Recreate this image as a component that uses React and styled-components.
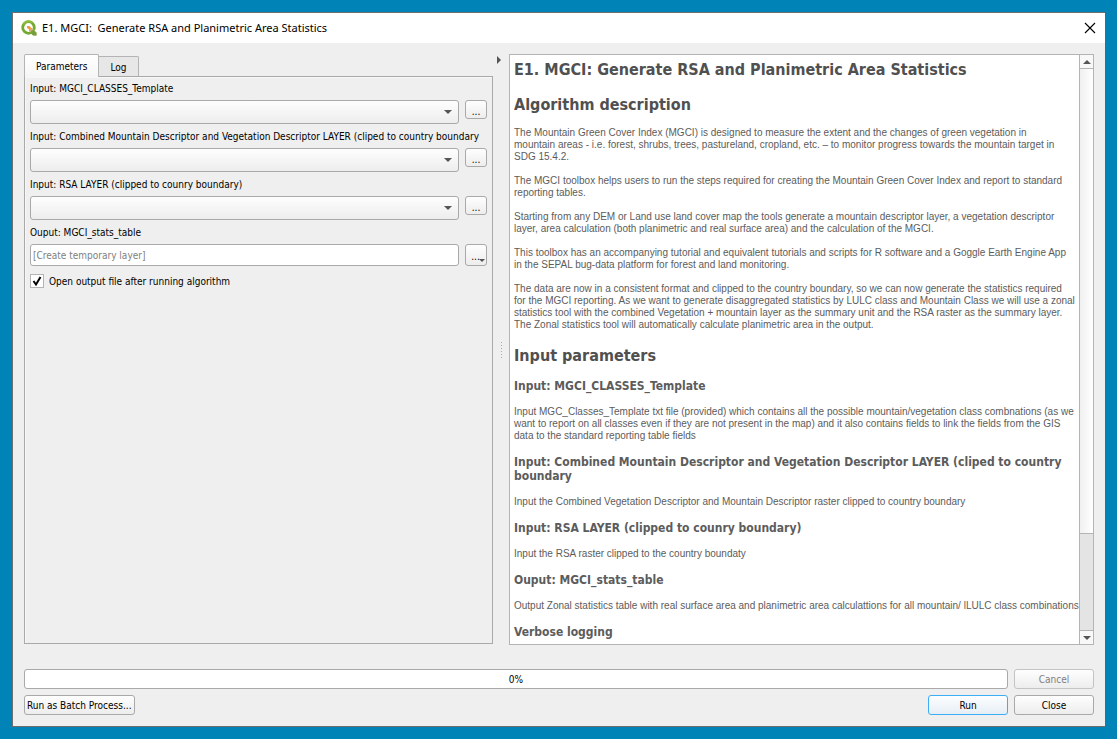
import React from "react";
import styled, { createGlobalStyle, css } from "styled-components";

const GlobalStyle = createGlobalStyle`
  *, *::before, *::after { box-sizing: border-box; }
  body { margin: 0; background: #0083b6; }
  body, button, input, select {
    font-family: "DejaVu Sans Condensed", "Noto Sans", sans-serif;
    font-size: 10px;
    line-height: 12px;
    color: #000;
  }
`;

const Desktop = styled.div`
  height: 100vh;
  padding: 12px;
  display: flex;
`;

const Window = styled.main`
  flex: 1;
  min-width: 0;
  display: flex;
  flex-direction: column;
  background: #efefef;
  border: solid #6e6e6e;
  border-width: 1px 0 1px 1px;
`;

const TitleBar = styled.header`
  height: 30px;
  flex: none;
  display: flex;
  align-items: center;
  gap: 5px;
  padding: 0 9px 0 8px;
  background: #fff;
`;

const Title = styled.h1`
  flex: 1;
  margin: 0;
  font: 400 11px/16px "Noto Sans", "Open Sans", sans-serif;
  white-space: pre;
`;

const CloseIconButton = styled.button`
  display: flex;
  padding: 0;
  border: 0;
  background: none;
`;

const Body = styled.div`
  flex: 1;
  min-height: 0;
  display: flex;
  flex-direction: column;
  padding: 11px;
`;

const Split = styled.div`
  flex: 1;
  min-height: 0;
  display: grid;
  grid-template-columns: minmax(0, 469fr) 16px minmax(0, 585fr);
`;

const TabWidget = styled.section`
  display: flex;
  flex-direction: column;
  min-height: 0;
`;

const TabBar = styled.div`
  display: flex;
  align-items: flex-end;
  height: 22px;
`;

const Tab = styled.button`
  height: 20px;
  padding: 2px 11px 0;
  border: 1px solid #b4b4b4;
  border-width: 1px 1px 0 0;
  border-radius: 0 2px 0 0;
  background: #e7e7e7;
  ${(p) =>
    p.$active &&
    css`
      height: 23px;
      margin-bottom: -1px;
      border-width: 1px 1px 0 1px;
      border-radius: 2px 2px 0 0;
      background: linear-gradient(#fff, #f6f6f6);
      z-index: 1;
    `}
`;

const TabPanel = styled.div`
  flex: 1;
  margin-bottom: 1px;
  padding: 6px 5px 5px;
  border: 1px solid #a9a9a9;
  box-shadow: inset 1px 1px #f7f7f7;
`;

const Field = styled.div`
  display: grid;
  grid-template-columns: minmax(0, 1fr) 22px;
  gap: 5px 6px;
  margin-bottom: 7px;
`;

const FieldLabel = styled.label`
  grid-column: 1 / -1;
  white-space: nowrap;
`;

const raised = css`
  border: 1px solid #a9a9a9;
  border-radius: 3px;
  background: linear-gradient(#fefefe, #ededed);
`;

const ComboWrap = styled.div`
  display: grid;
  align-items: center;
  & > * { grid-area: 1 / 1; }
  & > svg { justify-self: end; margin-right: 7px; pointer-events: none; }
`;

const Combo = styled.select`
  ${raised}
  width: 100%;
  height: 24px;
  appearance: none;
`;

const TextInput = styled.input`
  height: 22px;
  min-width: 0;
  padding: 1px 2px 0;
  border: 1px solid #a9a9a9;
  border-radius: 3px;
  background: #fff;
  &::placeholder { color: #808080; opacity: 1; }
`;

const BrowseButton = styled.button`
  ${raised}
  display: flex;
  align-items: center;
  justify-content: center;
  height: ${(p) => (p.$menu ? 22 : 19)}px;
  padding: ${(p) => (p.$menu ? "4px 0 0 4px" : "4px 0 0")};
  & > svg { align-self: flex-end; margin: 0 0 3px -1px; }
`;

const CheckRow = styled.label`
  display: flex;
  align-items: center;
  gap: 5px;
  margin-top: 8px;
`;

const CheckCaption = styled.span`
  padding-top: 2px;
`;

const CheckBox = styled.span`
  display: grid;
  & > * { grid-area: 1 / 1; }
  & > svg { pointer-events: none; }
`;

const CheckInput = styled.input`
  appearance: none;
  width: 14px;
  height: 14px;
  margin: 0;
  border: 1px solid #b4b4b4;
  background: #fff;
  & + svg { visibility: hidden; }
  &:checked + svg { visibility: visible; }
`;

const Splitter = styled.div`
  display: grid;
  grid-template-rows: 1fr auto 1fr;
  justify-items: center;
  & > svg:first-child { margin-top: 2px; margin-right: 4px; }
`;

const HelpFrame = styled.section`
  display: flex;
  min-height: 0;
  border: 1px solid #b4b4b4;
  background: #fff;
`;

const HelpText = styled.article`
  flex: 1;
  min-width: 0;
  overflow: hidden;
  padding: 5px 0 0 4px;
  color: #5c5c5c;
`;

const HelpHeading = styled.h2`
  margin: ${(p) => (p.$first ? "0 0 15px" : "15px 0 12px")};
  font-size: 16px;
  line-height: 20px;
  color: #505050;
`;

const HelpSubheading = styled.h3`
  margin: 13px 0;
  font-size: 12px;
  line-height: 14px;
  color: #5c5c5c;
`;

const HelpParagraph = styled.p`
  margin: 12px 0;
  font-family: "Liberation Sans", Arial, sans-serif;
  white-space: pre;
`;

const ScrollBar = styled.div`
  width: 14px;
  flex: none;
  display: flex;
  flex-direction: column;
  border-left: 1px solid #b4b4b4;
  background: #e4e4e4;
`;

const ScrollButton = styled.button`
  height: 13px;
  display: flex;
  align-items: center;
  justify-content: center;
  padding: 0;
  border: 0;
  background: #f8f8f8;
`;

const ScrollThumb = styled.div`
  flex: 466;
  border: solid #b4b4b4;
  border-width: 1px 0;
  background: linear-gradient(90deg, #f0f0f0, #fff);
`;

const ScrollTrack = styled.div`
  flex: 96;
  border-bottom: 1px solid #b4b4b4;
`;

const Footer = styled.footer`
  display: grid;
  grid-template-columns: 1fr 80px;
  gap: 6px;
  margin-top: 24px;
`;

const Progress = styled.div`
  height: 20px;
  display: flex;
  align-items: center;
  justify-content: center;
  padding-top: 2px;
  border: 1px solid #a9a9a9;
  border-radius: 3px;
  background: #fff;
`;

const Actions = styled.div`
  display: flex;
  justify-content: space-between;
`;

const PushButton = styled.button`
  ${raised}
  height: 20px;
  min-width: 80px;
  padding: 2px 2px 0;
  &:disabled { color: #808080; border-color: #c4c4c4; }
  ${(p) =>
    p.$primary &&
    css`
      border-color: #3daef5;
      background: linear-gradient(#fdfeff, #e6eef5);
    `}
`;

const Arrow = ({ up, size = 8 }) => (
  <svg width={size} height={size / 2} viewBox="0 0 8 4" aria-hidden="true">
    <path d={up ? "M0 4L4 0L8 4Z" : "M0 0H8L4 4Z"} fill="#555" />
  </svg>
);

const Logo = () => (
  <svg width="16" height="16" viewBox="0 0 16 16" aria-hidden="true">
    <circle cx="7.5" cy="7.5" r="5.8" fill="none" stroke="#74a92f" strokeWidth="2.8" />
    <path d="M2.2 4.5A6.2 6.2 0 0 1 11.5 2.8" fill="none" stroke="#8cbe3c" strokeWidth="1.8" />
    <path d="M8 8H11L15.5 12.5V15.5H12.5L8 11Z" fill="#c8b477" />
    <path d="M10.5 10.5L12.5 10L15.5 13V15.5H12L9.5 13Z" fill="#74a03a" />
    <path d="M6 6H8.5L10 7.5V9L8.5 10L6 8Z" fill="#f39a45" />
  </svg>
);

const selects = [
  ["classes", "Input: MGCI_CLASSES_Template"],
  ["combined", "Input: Combined Mountain Descriptor and Vegetation Descriptor LAYER (cliped to country boundary"],
  ["rsa", "Input: RSA LAYER (clipped to counry boundary)"],
];

const description = [
  "The Mountain Green Cover Index (MGCI) is designed to measure the extent and the changes of green vegetation in\nmountain areas - i.e. forest, shrubs, trees, pastureland, cropland, etc. – to monitor progress towards the mountain target in\nSDG 15.4.2.",
  "The MGCI toolbox helps users to run the steps required for creating the Mountain Green Cover Index and report to standard\nreporting tables.",
  "Starting from any DEM or Land use land cover map the tools generate a mountain descriptor layer, a vegetation descriptor\nlayer, area calculation (both planimetric and real surface area) and the calculation of the MGCI.",
  "This toolbox has an accompanying tutorial and equivalent tutorials and scripts for R software and a Goggle Earth Engine App\nin the SEPAL bug-data platform for forest and land monitoring.",
  "The data are now in a consistent format and clipped to the country boundary, so we can now generate the statistics required\nfor the MGCI reporting. As we want to generate disaggregated statistics by LULC class and Mountain Class we will use a zonal\nstatistics tool with the combined Vegetation + mountain layer as the summary unit and the RSA raster as the summary layer.\nThe Zonal statistics tool will automatically calculate planimetric area in the output.",
];

const parameters = [
  [
    "Input: MGCI_CLASSES_Template",
    "Input MGC_Classes_Template txt file (provided) which contains all the possible mountain/vegetation class combnations (as we\nwant to report on all classes even if they are not present in the map) and it also contains fields to link the fields from the GIS\ndata to the standard reporting table fields",
  ],
  [
    "Input: Combined Mountain Descriptor and Vegetation Descriptor LAYER (cliped to country boundary",
    "Input the Combined Vegetation Descriptor and Mountain Descriptor raster clipped to country boundary",
  ],
  ["Input: RSA LAYER (clipped to counry boundary)", "Input the RSA raster clipped to the country boundaty"],
  [
    "Ouput: MGCI_stats_table",
    "Output Zonal statistics table with real surface area and planimetric area calculattions for all mountain/ lLULC class combinations",
  ],
];

export default function App() {
  return (
    <Desktop>
      <GlobalStyle />
      <Window>
        <TitleBar>
          <Logo />
          <Title>{"E1. MGCI:  Generate RSA and Planimetric Area Statistics"}</Title>
          <CloseIconButton aria-label="Close window">
            <svg width="12" height="12" viewBox="0 0 12 12">
              <path d="M1 1L11 11M11 1L1 11" stroke="#000" strokeWidth="1.1" />
            </svg>
          </CloseIconButton>
        </TitleBar>
        <Body>
          <Split>
            <TabWidget>
              <TabBar role="tablist">
                <Tab role="tab" aria-selected="true" $active>Parameters</Tab>
                <Tab role="tab" aria-selected="false">Log</Tab>
              </TabBar>
              <TabPanel role="tabpanel">
                {selects.map(([id, label]) => (
                  <Field key={id}>
                    <FieldLabel htmlFor={id}>{label}</FieldLabel>
                    <ComboWrap>
                      <Combo id={id}><option value="" /></Combo>
                      <Arrow />
                    </ComboWrap>
                    <BrowseButton>...</BrowseButton>
                  </Field>
                ))}
                <Field>
                  <FieldLabel htmlFor="output">Ouput: MGCI_stats_table</FieldLabel>
                  <TextInput id="output" placeholder="[Create temporary layer]" />
                  <BrowseButton $menu>...<Arrow size={6} /></BrowseButton>
                </Field>
                <CheckRow>
                  <CheckBox>
                    <CheckInput type="checkbox" defaultChecked />
                    <svg width="14" height="14" viewBox="0 0 14 14">
                      <path d="M3.5 7L6 10.5L10.5 3" fill="none" stroke="#000" strokeWidth="2" />
                    </svg>
                  </CheckBox>
                  <CheckCaption>Open output file after running algorithm</CheckCaption>
                </CheckRow>
              </TabPanel>
            </TabWidget>
            <Splitter>
              <svg width="4" height="8" viewBox="0 0 4 8"><path d="M0 0L4 4L0 8Z" fill="#555" /></svg>
              <svg width="2" height="18" viewBox="0 0 2 18">
                <path d="M1.5 1V18" stroke="#a8a8a8" strokeWidth="1" strokeDasharray="1 2" />
              </svg>
            </Splitter>
            <HelpFrame>
              <HelpText>
                <HelpHeading $first>E1. MGCI: Generate RSA and Planimetric Area Statistics</HelpHeading>
                <HelpHeading>Algorithm description</HelpHeading>
                {description.map((text) => <HelpParagraph key={text}>{text}</HelpParagraph>)}
                <HelpHeading>Input parameters</HelpHeading>
                {parameters.map(([name, text]) => (
                  <React.Fragment key={name}>
                    <HelpSubheading>{name}</HelpSubheading>
                    <HelpParagraph>{text}</HelpParagraph>
                  </React.Fragment>
                ))}
                <HelpSubheading>Verbose logging</HelpSubheading>
              </HelpText>
              <ScrollBar>
                <ScrollButton aria-label="Scroll up"><Arrow up /></ScrollButton>
                <ScrollThumb />
                <ScrollTrack />
                <ScrollButton aria-label="Scroll down"><Arrow /></ScrollButton>
              </ScrollBar>
            </HelpFrame>
          </Split>
          <Footer>
            <Progress role="progressbar" aria-valuenow={0} aria-valuemin={0} aria-valuemax={100}>0%</Progress>
            <PushButton disabled>Cancel</PushButton>
            <Actions>
              <PushButton>Run as Batch Process...</PushButton>
              <PushButton $primary>Run</PushButton>
            </Actions>
            <PushButton>Close</PushButton>
          </Footer>
        </Body>
      </Window>
    </Desktop>
  );
}
